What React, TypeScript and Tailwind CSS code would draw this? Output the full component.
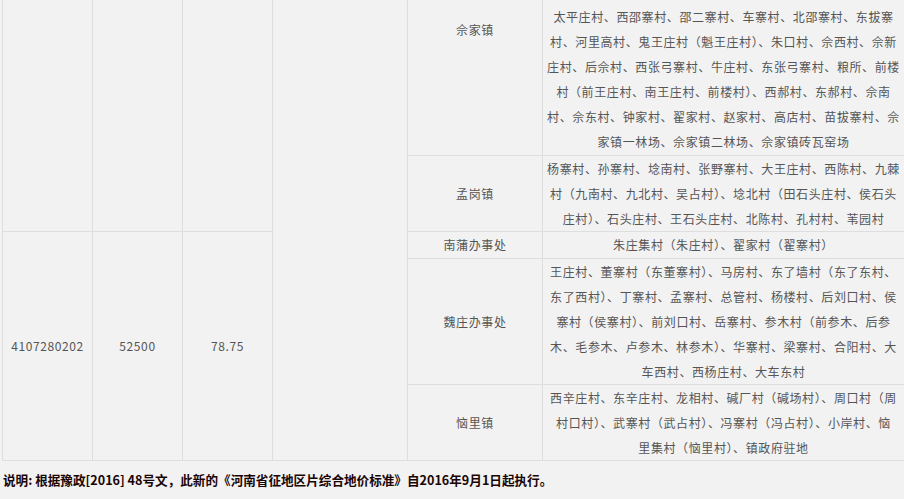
const cell = "border border-[#dedede] p-0 text-center align-middle";

const towns = [
  {
    name: "佘家镇",
    top: true,
    lines: [
      "太平庄村、西邵寨村、邵二寨村、车寨村、北邵寨村、东拔寨",
      "村、河里高村、鬼王庄村（魁王庄村）、朱口村、佘西村、佘新",
      "庄村、后佘村、西张弓寨村、牛庄村、东张弓寨村、粮所、前楼",
      "村（前王庄村、南王庄村、前楼村）、西郝村、东郝村、佘南",
      "村、佘东村、钟家村、翟家村、赵家村、高店村、苗拔寨村、佘",
      "家镇一林场、佘家镇二林场、佘家镇砖瓦窑场",
    ],
  },
  {
    name: "孟岗镇",
    lines: [
      "杨寨村、孙寨村、埝南村、张野寨村、大王庄村、西陈村、九棘",
      "村（九南村、九北村、吴占村）、埝北村（田石头庄村、侯石头",
      "庄村）、石头庄村、王石头庄村、北陈村、孔村村、苇园村",
    ],
  },
  {
    name: "南蒲办事处",
    lines: ["朱庄集村（朱庄村）、翟家村（翟寨村）"],
  },
  {
    name: "魏庄办事处",
    lines: [
      "王庄村、董寨村（东董寨村）、马房村、东了墙村（东了东村、",
      "东了西村）、丁寨村、孟寨村、总管村、杨楼村、后刘口村、侯",
      "寨村（侯寨村）、前刘口村、岳寨村、参木村（前参木、后参",
      "木、毛参木、卢参木、林参木）、华寨村、梁寨村、合阳村、大",
      "车西村、西杨庄村、大车东村",
    ],
  },
  {
    name: "恼里镇",
    lines: [
      "西辛庄村、东辛庄村、龙相村、碱厂村（碱场村）、周口村（周",
      "村口村）、武寨村（武占村）、冯寨村（冯占村）、小岸村、恼",
      "里集村（恼里村）、镇政府驻地",
    ],
  },
];

function Villages({ lines, single }: { lines: string[]; single?: boolean }) {
  return (
    <div className={single ? "leading-[26px]" : "leading-[25px]"}>
      {lines.map((l) => (
        <div key={l} className="whitespace-nowrap">
          {l}
        </div>
      ))}
    </div>
  );
}

export default function App() {
  const [t1, t2, t3, t4, t5] = towns;
  return (
    <div
      className="min-h-screen w-full overflow-hidden bg-[#f2f2f2] text-[#555] text-[12px] tracking-[0.6px]"
      style={{ fontFamily: '"Noto Sans CJK SC", sans-serif' }}
    >
      <table className="ml-[2px] w-[902px] table-fixed border-collapse">
        <colgroup>
          <col className="w-[90px]" />
          <col className="w-[90px]" />
          <col className="w-[90px]" />
          <col className="w-[135px]" />
          <col className="w-[135px]" />
          <col className="w-[362px]" />
        </colgroup>
        <tbody>
          <tr>
            <td rowSpan={2} className={`${cell} border-t-0`} />
            <td rowSpan={2} className={`${cell} border-t-0`} />
            <td rowSpan={2} className={`${cell} border-t-0`} />
            <td rowSpan={5} className={`${cell} border-t-0`} />
            <td className={`${cell} border-t-0 align-top pt-[17px] leading-[25px]`}>{t1.name}</td>
            <td className={`${cell} border-t-0 pt-[4px] pb-[1px]`}>
              <Villages lines={t1.lines} />
            </td>
          </tr>
          <tr>
            <td className={cell}>{t2.name}</td>
            <td className={cell}>
              <Villages lines={t2.lines} />
            </td>
          </tr>
          <tr>
            <td rowSpan={3} className={cell}>4107280202</td>
            <td rowSpan={3} className={cell}>52500</td>
            <td rowSpan={3} className={cell}>78.75</td>
            <td className={cell}>{t3.name}</td>
            <td className={cell}>
              <Villages lines={t3.lines} single />
            </td>
          </tr>
          <tr>
            <td className={cell}>{t4.name}</td>
            <td className={cell}>
              <Villages lines={t4.lines} />
            </td>
          </tr>
          <tr>
            <td className={cell}>{t5.name}</td>
            <td className={cell}>
              <Villages lines={t5.lines} />
            </td>
          </tr>
        </tbody>
      </table>
      <p className="mt-[9px] pl-[3px] text-[12.6px] font-bold leading-[20px] tracking-normal text-[#1a0505]">
        说明: 根据豫政[2016] 48号文，此新的《河南省征地区片综合地价标准》自2016年9月1日起执行。
      </p>
    </div>
  );
}
